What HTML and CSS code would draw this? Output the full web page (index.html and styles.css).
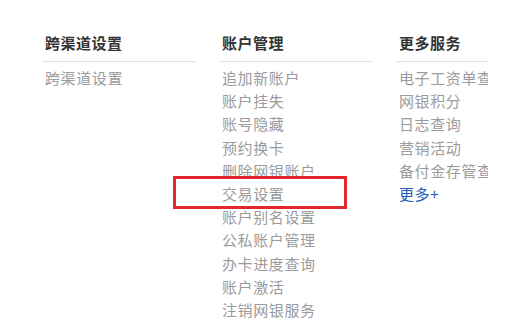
FILE: index.html
```html
<!DOCTYPE html>
<html lang="zh-CN">
<head>
<meta charset="utf-8">
<title>菜单</title>
<link rel="stylesheet" href="styles.css">
</head>
<body>
<div class="menu">
  <div class="col col1">
    <div class="head">跨渠道设置</div>
    <ul class="list">
      <li>跨渠道设置</li>
    </ul>
  </div>
  <div class="col col2">
    <div class="head">账户管理</div>
    <ul class="list">
      <li>追加新账户</li>
      <li>账户挂失</li>
      <li>账号隐藏</li>
      <li>预约换卡</li>
      <li>删除网银账户</li>
      <li class="hl">交易设置</li>
      <li>账户别名设置</li>
      <li>公私账户管理</li>
      <li>办卡进度查询</li>
      <li>账户激活</li>
      <li>注销网银服务</li>
    </ul>
  </div>
  <div class="col col3">
    <div class="head">更多服务</div>
    <ul class="list">
      <li>电子工资单查询</li>
      <li>网银积分</li>
      <li>日志查询</li>
      <li>营销活动</li>
      <li>备付金存管查询</li>
      <li class="more">更多+</li>
    </ul>
  </div>
</div>
</body>
</html>
```

FILE: styles.css
```css
html, body {
  margin: 0;
  padding: 0;
  background: #ffffff;
}
body {
  width: 522px;
  height: 336px;
  overflow: hidden;
  font-family: "Microsoft YaHei", "Noto Sans CJK SC", "Noto Sans", sans-serif;
}
.menu {
  display: flex;
  gap: 23px;
  padding: 32px 0 0 42px;
}
.col {
  width: 154px;
  flex: none;
}
.col3 {
  width: 92px;
  overflow: hidden;
}
.head {
  font-size: 15px;
  font-weight: bold;
  color: #333333;
  line-height: 21px;
  letter-spacing: 0.5px;
  padding: 0 0 8px 3px;
  border-bottom: 1px solid #e0e0e0;
  white-space: nowrap;
}
.list {
  list-style: none;
  margin: 4px 0 0 0;
  padding: 0;
}
.list li {
  font-size: 15px;
  line-height: 23.2px;
  letter-spacing: 0.6px;
  color: #9b9b9b;
  padding-left: 3px;
  white-space: nowrap;
}
.list li.more {
  color: #2459b8;
}
.list li.hl {
  position: relative;
}
.list li.hl::after {
  content: "";
  position: absolute;
  left: -46px;
  width: 168px;
  top: -6px;
  bottom: -4px;
  border: 3px solid #e3262b;
}
```
